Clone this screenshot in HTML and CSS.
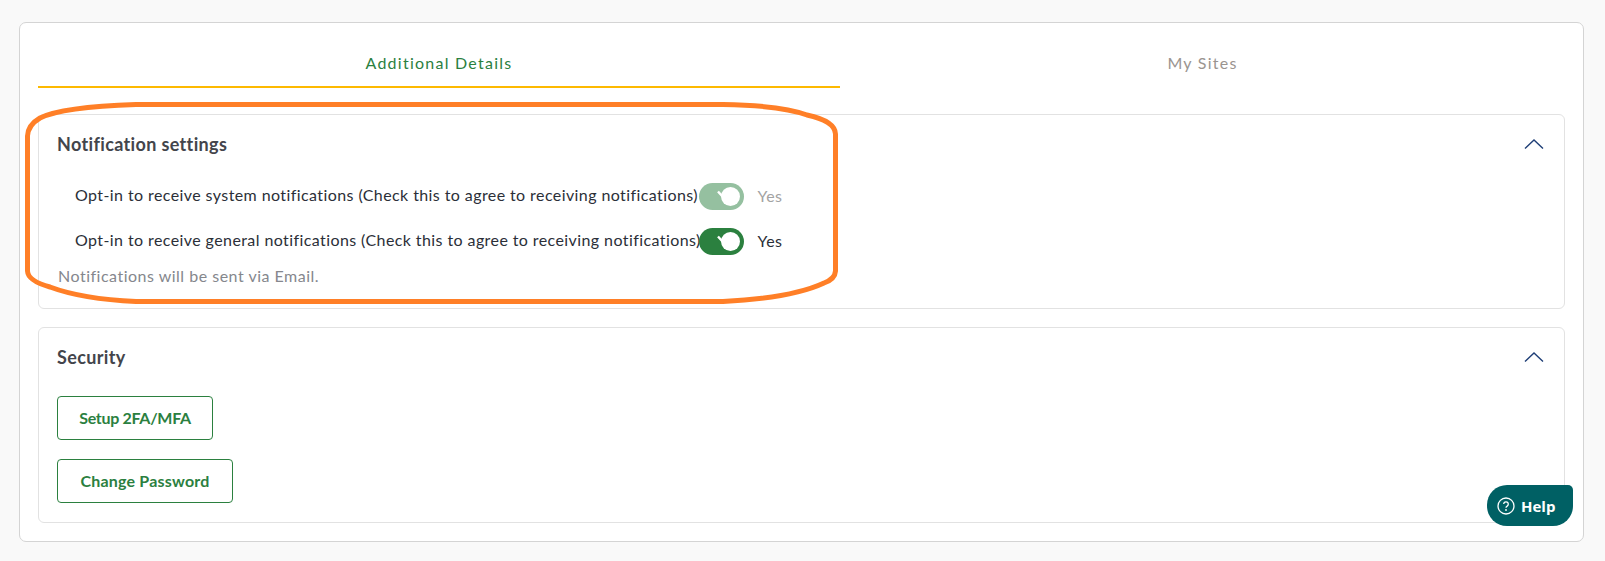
FILE: index.html
```html
<!DOCTYPE html>
<html lang="en">
<head>
    <meta charset="UTF-8">
    <meta name="viewport" content="width=device-width, initial-scale=1.0">
    <title>Profile</title>
    <link rel="stylesheet" href="styles.css">
</head>
<body>
    <div class="card">
        <div class="tabs">
            <div class="tab active">Additional Details</div>
            <div class="tab">My Sites</div>
        </div>

        <section class="panel notifications">
            <div class="panel-head">
                <h2>Notification settings</h2>
                <svg class="chevron" viewBox="0 0 20 10" width="20" height="10"><path d="M1 9.5 10 1l9 8.5" fill="none" stroke="#1f3f77" stroke-width="1.4"/></svg>
            </div>
            <div class="opt-row disabled">
                <span class="opt-label">Opt-in to receive system notifications (Check this to agree to receiving notifications)</span>
                <span class="toggle">
                    <svg class="tick" viewBox="0 0 14 12" width="14" height="12"><path d="M1 2.500 6 8l6-6" fill="none" stroke="#fff" stroke-width="2.400"/></svg>
                    <span class="knob"></span>
                </span>
                <span class="opt-value">Yes</span>
            </div>
            <div class="opt-row">
                <span class="opt-label">Opt-in to receive general notifications (Check this to agree to receiving notifications)</span>
                <span class="toggle">
                    <svg class="tick" viewBox="0 0 14 12" width="14" height="12"><path d="M1 2.500 6 8l6-6" fill="none" stroke="#fff" stroke-width="2.400"/></svg>
                    <span class="knob"></span>
                </span>
                <span class="opt-value">Yes</span>
            </div>
            <p class="note">Notifications will be sent via Email.</p>
        </section>

        <section class="panel security">
            <div class="panel-head">
                <h2>Security</h2>
                <svg class="chevron" viewBox="0 0 20 10" width="20" height="10"><path d="M1 9.5 10 1l9 8.5" fill="none" stroke="#1f3f77" stroke-width="1.4"/></svg>
            </div>
            <div class="actions">
                <button class="outline-btn setup-btn">Setup 2FA/MFA</button>
                <button class="outline-btn password-btn">Change Password</button>
            </div>
        </section>
    </div>

    <!-- hand-drawn annotation over the notification panel -->
    <svg class="annotation" viewBox="0 0 840 210" width="840" height="210">
        <path d="M114 5.500H701Q760 6.500 785 16Q813 22 813.500 35V172Q813 180 802 184Q770 199 701 202.500H114Q60 200 28 188Q6 182 5.500 172V37Q6 26 18 19Q40 8 114 5.500Z" fill="none" stroke="#ff7f27" stroke-width="5"/>
    </svg>

    <button class="help">
        <svg viewBox="0 0 18 18" width="18" height="18"><circle cx="9" cy="9" r="8" fill="none" stroke="#fff" stroke-width="1.300"/><path d="M6.700 7.100a2.300 2.300 0 1 1 3.500 2c-.8.500-1.200.9-1.200 1.700" fill="none" stroke="#fff" stroke-width="1.300"/><circle cx="9" cy="13" r=".9" fill="#fff"/></svg>
        Help
    </button>
</body>
</html>
```

FILE: styles.css
```css
* {
    box-sizing: border-box;
}
body {
    margin: 0;
    height: 561px;
    overflow: hidden;
    padding: 22px 21px 0 19px;
    background: #f9f9f9;
    font-family: Lato, sans-serif;
    color: #2b2f38;
}
.card {
    height: 520px;
    padding: 0 18px;
    background: white;
    border: 1px solid #d4d4d4;
    border-radius: 7px;
}
.tabs {
    display: flex;
    height: 65px;
    margin-bottom: 26px;
}
.tab {
    flex: 1;
    padding-top: 30px;
    text-align: center;
    font-size: 16px;
    letter-spacing: 1.25px;
    color: #9a9490;
}
.tab.active {
    flex: 0 0 802px;
    color: #2b803f;
    border-bottom: 2px solid #fdb900;
}
.panel {
    padding: 0 18px;
    border: 1px solid #e2e2e2;
    border-radius: 6px;
}
.notifications {
    height: 195px;
    margin-bottom: 18px;
}
.security {
    height: 196px;
}
.panel-head {
    display: flex;
    justify-content: space-between;
    align-items: center;
    height: 58px;
    padding-right: 2px;
}
.panel-head h2 {
    margin: 0;
    font-size: 18px;
    font-weight: 700;
    letter-spacing: 0.35px;
    color: #43454b;
}
.chevron {
    margin-top: -1px;
}
.opt-row {
    display: flex;
    align-items: center;
    height: 27px;
    margin: 10px 0 18px 18px;
    font-size: 16px;
    letter-spacing: 0.41px;
}
.opt-row + .opt-row {
    margin-top: 0;
}
.opt-label {
    flex: 0 0 623.5px;
    min-width: 0;
    padding-bottom: 4px;
    white-space: nowrap;
}
.opt-value {
    margin-left: 14px;
    padding-bottom: 3px;
}
.toggle {
    position: relative;
    width: 45px;
    height: 27px;
    border-radius: 14px;
    background: #2b803f;
}
.knob {
    position: absolute;
    top: 4px;
    right: 4px;
    width: 19px;
    height: 19px;
    border-radius: 50%;
    background: white;
}
.tick {
    position: absolute;
    top: 6px;
    left: 18px;
}
.disabled .toggle {
    background: #95c0a0;
}
.disabled .opt-value {
    color: #a3a3a3;
}
.note {
    margin: -7px 0 0 1px;
    font-size: 16px;
    letter-spacing: 0.5px;
    color: #85878d;
}
.actions {
    display: flex;
    flex-direction: column;
    align-items: flex-start;
    gap: 19px;
    padding-top: 10px;
}
.outline-btn {
    height: 44px;
    padding: 0 0 2px;
    background: white;
    border: 1px solid #2b803f;
    border-radius: 4px;
    font-family: inherit;
    font-size: 16px;
    font-weight: 700;
    color: #2b803f;
}
.setup-btn {
    width: 156px;
    letter-spacing: -0.3px;
}
.password-btn {
    width: 176px;
    letter-spacing: 0.2px;
}
.annotation {
    position: absolute;
    top: 99px;
    left: 22px;
}
.help {
    position: absolute;
    top: 485px;
    left: 1487px;
    display: flex;
    align-items: center;
    gap: 6px;
    width: 86px;
    height: 41px;
    padding: 0 0 0 10px;
    border: none;
    border-radius: 20px 5px 20px 20px;
    background: #006064;
    font-family: "Open Sans", sans-serif;
    font-size: 15px;
    font-weight: 700;
    color: white;
}
```
